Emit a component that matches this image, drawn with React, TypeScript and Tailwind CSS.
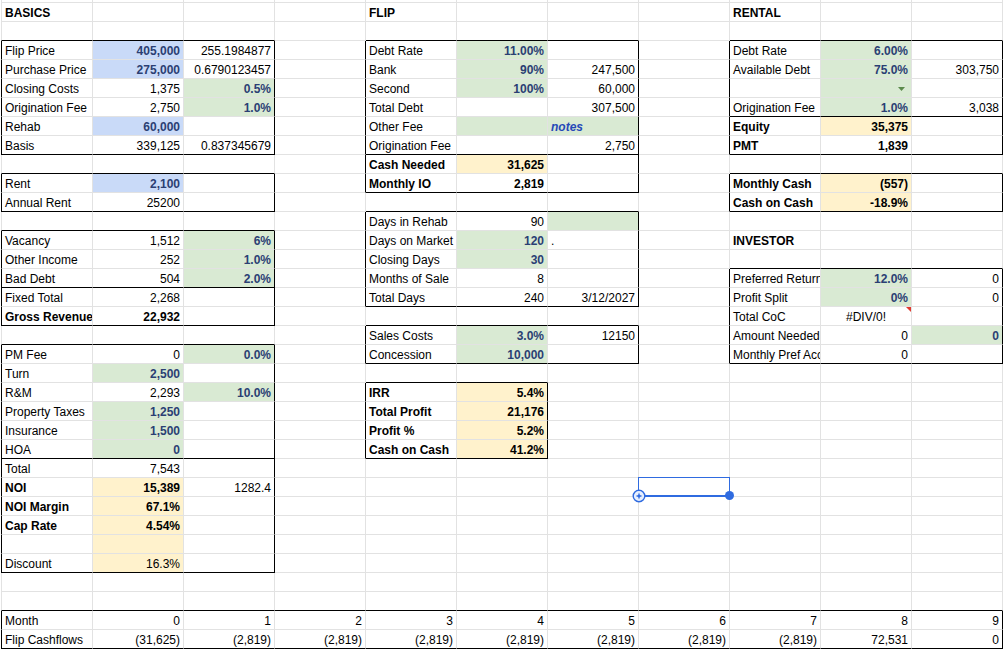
type Bg = "blue" | "green" | "yellow";
type Cell = {
  t?: string;
  a?: "l" | "r" | "c";
  bg?: Bg;
  s?: "in" | "b" | "note";
  extra?: "dd" | "err";
};

type Box = { r1: number; r2: number; c1: number; c2: number; inner?: number[] };

const ROWS = 34;
const COLS = 11;

// table outlines (rows 1-based, cols 0-based)
const BOXES: Box[] = [
  { r1: 3, r2: 8, c1: 0, c2: 2 },
  { r1: 10, r2: 11, c1: 0, c2: 2 },
  { r1: 13, r2: 17, c1: 0, c2: 2, inner: [16] },
  { r1: 19, r2: 30, c1: 0, c2: 2, inner: [25] },
  { r1: 3, r2: 10, c1: 4, c2: 6, inner: [9] },
  { r1: 12, r2: 16, c1: 4, c2: 6 },
  { r1: 18, r2: 19, c1: 4, c2: 6 },
  { r1: 21, r2: 24, c1: 4, c2: 5 },
  { r1: 3, r2: 8, c1: 8, c2: 10, inner: [7] },
  { r1: 10, r2: 11, c1: 8, c2: 10 },
  { r1: 15, r2: 19, c1: 8, c2: 10 },
  { r1: 33, r2: 34, c1: 0, c2: 10 },
];

const cells: Record<string, Cell> = {};

function set(ref: string, t: string, o: Partial<Cell> = {}) {
  const c = ref.charCodeAt(0) - 65;
  const r = parseInt(ref.slice(1), 10);
  cells[`${r},${c}`] = { t, ...o };
}

// BASICS
set("A1", "BASICS", { s: "b" });
set("A3", "Flip Price");
set("B3", "405,000", { bg: "blue", s: "in" });
set("C3", "255.1984877");
set("A4", "Purchase Price");
set("B4", "275,000", { bg: "blue", s: "in" });
set("C4", "0.6790123457");
set("A5", "Closing Costs");
set("B5", "1,375");
set("C5", "0.5%", { bg: "green", s: "in" });
set("A6", "Origination Fee");
set("B6", "2,750");
set("C6", "1.0%", { bg: "green", s: "in" });
set("A7", "Rehab");
set("B7", "60,000", { bg: "blue", s: "in" });
set("A8", "Basis");
set("B8", "339,125");
set("C8", "0.837345679");
set("A10", "Rent");
set("B10", "2,100", { bg: "blue", s: "in" });
set("A11", "Annual Rent");
set("B11", "25200");
set("A13", "Vacancy");
set("B13", "1,512");
set("C13", "6%", { bg: "green", s: "in" });
set("A14", "Other Income");
set("B14", "252");
set("C14", "1.0%", { bg: "green", s: "in" });
set("A15", "Bad Debt");
set("B15", "504");
set("C15", "2.0%", { bg: "green", s: "in" });
set("A16", "Fixed Total");
set("B16", "2,268");
set("A17", "Gross Revenue", { s: "b" });
set("B17", "22,932", { s: "b" });
set("A19", "PM Fee");
set("B19", "0");
set("C19", "0.0%", { bg: "green", s: "in" });
set("A20", "Turn");
set("B20", "2,500", { bg: "green", s: "in" });
set("A21", "R&M");
set("B21", "2,293");
set("C21", "10.0%", { bg: "green", s: "in" });
set("A22", "Property Taxes");
set("B22", "1,250", { bg: "green", s: "in" });
set("A23", "Insurance");
set("B23", "1,500", { bg: "green", s: "in" });
set("A24", "HOA");
set("B24", "0", { bg: "green", s: "in" });
set("A25", "Total");
set("B25", "7,543");
set("A26", "NOI", { s: "b" });
set("B26", "15,389", { bg: "yellow", s: "b" });
set("C26", "1282.4");
set("A27", "NOI Margin", { s: "b" });
set("B27", "67.1%", { bg: "yellow", s: "b" });
set("A28", "Cap Rate", { s: "b" });
set("B28", "4.54%", { bg: "yellow", s: "b" });
set("B29", "", { bg: "yellow" });
set("A30", "Discount");
set("B30", "16.3%", { bg: "yellow" });

// FLIP
set("E1", "FLIP", { s: "b" });
set("E3", "Debt Rate");
set("F3", "11.00%", { bg: "green", s: "in" });
set("E4", "Bank");
set("F4", "90%", { bg: "green", s: "in" });
set("G4", "247,500");
set("E5", "Second");
set("F5", "100%", { bg: "green", s: "in" });
set("G5", "60,000");
set("E6", "Total Debt");
set("G6", "307,500");
set("E7", "Other Fee");
set("F7", "", { bg: "green" });
set("G7", "notes", { bg: "green", s: "note", a: "l" });
set("E8", "Origination Fee");
set("G8", "2,750");
set("E9", "Cash Needed", { s: "b" });
set("F9", "31,625", { bg: "yellow", s: "b" });
set("E10", "Monthly IO", { s: "b" });
set("F10", "2,819", { s: "b" });
set("E12", "Days in Rehab");
set("F12", "90");
set("G12", "", { bg: "green" });
set("E13", "Days on Market");
set("F13", "120", { bg: "green", s: "in" });
set("G13", ".", { a: "l" });
set("E14", "Closing Days");
set("F14", "30", { bg: "green", s: "in" });
set("E15", "Months of Sale");
set("F15", "8");
set("E16", "Total Days");
set("F16", "240");
set("G16", "3/12/2027");
set("E18", "Sales Costs");
set("F18", "3.0%", { bg: "green", s: "in" });
set("G18", "12150");
set("E19", "Concession");
set("F19", "10,000", { bg: "green", s: "in" });
set("E21", "IRR", { s: "b" });
set("F21", "5.4%", { bg: "yellow", s: "b" });
set("E22", "Total Profit", { s: "b" });
set("F22", "21,176", { bg: "yellow", s: "b" });
set("E23", "Profit %", { s: "b" });
set("F23", "5.2%", { bg: "yellow", s: "b" });
set("E24", "Cash on Cash", { s: "b" });
set("F24", "41.2%", { bg: "yellow", s: "b" });

// RENTAL
set("I1", "RENTAL", { s: "b" });
set("I3", "Debt Rate");
set("J3", "6.00%", { bg: "green", s: "in" });
set("I4", "Available Debt");
set("J4", "75.0%", { bg: "green", s: "in" });
set("K4", "303,750");
set("J5", "", { bg: "green", extra: "dd" });
set("I6", "Origination Fee");
set("J6", "1.0%", { bg: "green", s: "in" });
set("K6", "3,038");
set("I7", "Equity", { s: "b" });
set("J7", "35,375", { bg: "yellow", s: "b" });
set("I8", "PMT", { s: "b" });
set("J8", "1,839", { s: "b" });
set("I10", "Monthly Cash", { s: "b" });
set("J10", "(557)", { bg: "yellow", s: "b" });
set("I11", "Cash on Cash", { s: "b" });
set("J11", "-18.9%", { bg: "yellow", s: "b" });

// INVESTOR
set("I13", "INVESTOR", { s: "b" });
set("I15", "Preferred Return");
set("J15", "12.0%", { bg: "green", s: "in" });
set("K15", "0");
set("I16", "Profit Split");
set("J16", "0%", { bg: "green", s: "in" });
set("K16", "0");
set("I17", "Total CoC");
set("J17", "#DIV/0!", { a: "c", extra: "err" });
set("I18", "Amount Needed");
set("J18", "0");
set("K18", "0", { bg: "green", s: "in" });
set("I19", "Monthly Pref Acc");
set("J19", "0");

// cashflows
set("A33", "Month");
set("A34", "Flip Cashflows");
const flows = ["(31,625)", "(2,819)", "(2,819)", "(2,819)", "(2,819)", "(2,819)", "(2,819)", "(2,819)", "72,531", "0"];
flows.forEach((v, i) => {
  const col = String.fromCharCode(66 + i);
  set(`${col}33`, String(i));
  set(`${col}34`, v);
});

function bottomBlack(r: number, c: number) {
  return BOXES.some(
    (b) => c >= b.c1 && c <= b.c2 && (r === b.r2 || r + 1 === b.r1 || (b.inner ?? []).includes(r + 1))
  );
}
function rightBlack(r: number, c: number) {
  return BOXES.some((b) => r >= b.r1 && r <= b.r2 && (c === b.c2 || c + 1 === b.c1));
}
function leftBlack(r: number) {
  return BOXES.some((b) => b.c1 === 0 && r >= b.r1 && r <= b.r2);
}

const BG: Record<Bg, string> = {
  blue: "bg-[#c9daf8]",
  green: "bg-[#d9ead3]",
  yellow: "bg-[#fff2cc]",
};

const STYLE = {
  in: "font-bold text-[#2b3f73]",
  b: "font-bold text-black",
  note: "font-bold italic text-[#2549b8]",
};

function GridCell({ r, c }: { r: number; c: number }) {
  const cell = cells[`${r},${c}`] ?? {};
  const text = cell.t ?? "";
  const align = cell.a ?? (/^[-\d(#.]/.test(text) ? "r" : "l");
  const justify = align === "r" ? "justify-end" : align === "c" ? "justify-center" : "justify-start";

  return (
    <div
      className={`relative flex items-center overflow-hidden whitespace-nowrap px-[3px] pt-px leading-[14px] border-b border-r ${
        c === 0 ? `border-l ${leftBlack(r) ? "border-l-black" : "border-l-[#e2e2e2]"}` : ""
      } ${bottomBlack(r, c) ? "border-b-black" : "border-b-[#e2e2e2]"} ${
        rightBlack(r, c) ? "border-r-black" : "border-r-[#e2e2e2]"
      } ${justify} ${cell.bg ? BG[cell.bg] : "bg-white"} ${cell.s ? STYLE[cell.s] : "text-black"}`}
    >
      {text}
      {cell.extra === "dd" && (
        <svg className="absolute right-[6px] top-[8px]" width="7" height="4" viewBox="0 0 7 4">
          <polygon points="0,0 7,0 3.5,4" fill="#5b8a4b" />
        </svg>
      )}
      {cell.extra === "err" && (
        <svg className="absolute right-0 top-0" width="5" height="5" viewBox="0 0 5 5">
          <polygon points="0,0 5,0 5,5" fill="#e03a2f" />
        </svg>
      )}
    </div>
  );
}

export default function App() {
  const rows = Array.from({ length: ROWS }, (_, i) => i + 1);
  const cols = Array.from({ length: COLS }, (_, i) => i);

  return (
    <div className="relative h-[650px] w-[1004px] overflow-hidden bg-white pl-px font-['Liberation_Sans',Arial,sans-serif] text-[12px]">
      <div className="grid grid-cols-[92px_repeat(10,91px)] grid-rows-[3px_repeat(34,19px)]">
        {cols.map((c) => (
          <div
            key={`h${c}`}
            className={`border-b border-r border-b-[#e2e2e2] border-r-[#e2e2e2] ${c === 0 ? "border-l border-l-[#e2e2e2]" : ""}`}
          />
        ))}
        {rows.map((r) => cols.map((c) => <GridCell key={`${r}-${c}`} r={r} c={c} />))}
      </div>

      {/* active cell selection with touch handles */}
      <div className="absolute left-[638px] top-[477px] h-[20px] w-[92px] border border-b-2 border-[#2f6be0]" />
      <svg className="absolute left-[632px] top-[489px]" width="14" height="14" viewBox="0 0 14 14">
        <circle cx="7" cy="7" r="5.8" fill="#e8f0fe" stroke="#2f6be0" strokeWidth="1.4" />
        <path d="M7 3.6 L7.9 6.1 L10.4 7 L7.9 7.9 L7 10.4 L6.1 7.9 L3.6 7 L6.1 6.1 Z" fill="#2f6be0" />
      </svg>
      <div className="absolute left-[725px] top-[491px] h-[9px] w-[9px] rounded-full bg-[#2f6be0]" />
    </div>
  );
}
